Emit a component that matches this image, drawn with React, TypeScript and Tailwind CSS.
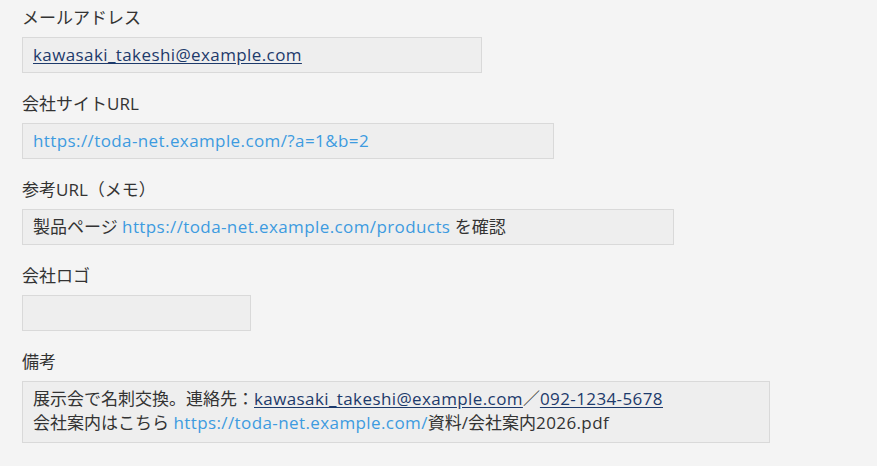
import React from "react";

const Field = ({ label, width, children }: { label: string; width: string; children?: React.ReactNode }) => {
    return (
        <div className="mb-[19px]">
            <div className="h-6 leading-6 text-[#333333]">{label}</div>
            <div className={`mt-[7px] min-h-9 border border-[#d9d9d9] bg-[#eeeeee] px-[10px] py-[5px] leading-6 text-[#333333] ${width}`}>
                {children}
            </div>
        </div>
    );
};

const Mail = ({ children }: { children: React.ReactNode }) => (
    <a href="#" className="tracking-[0.4px] text-[#1d3a6b] underline underline-offset-2">{children}</a>
);

const Url = ({ children }: { children: React.ReactNode }) => (
    <a href="#" className="tracking-[0.4px] text-[#3d9be0]">{children}</a>
);

export default function App() {
    return (
        <div
            className="min-h-[466px] bg-[#f4f4f4] px-[22px] pt-[6px] text-[17px]"
            style={{ fontFamily: '"Open Sans", "Noto Sans CJK JP", sans-serif' }}
        >
            <Field label="メールアドレス" width="w-[460px]">
                <Mail>kawasaki_takeshi@example.com</Mail>
            </Field>
            <Field label="会社サイトURL" width="w-[532px]">
                <Url>https://toda-net.example.com/?a=1&amp;b=2</Url>
            </Field>
            <Field label="参考URL（メモ）" width="w-[652px]">
                製品ページ <Url>https://toda-net.example.com/products</Url> を確認
            </Field>
            <Field label="会社ロゴ" width="w-[229px]" />
            <Field label="備考" width="w-[748px] pb-[7px]">
                展示会で名刺交換。連絡先：<Mail>kawasaki_takeshi@example.com</Mail>／<Mail>092-1234-5678</Mail>
                <br />
                会社案内はこちら <Url>https://toda-net.example.com/</Url>資料/会社案内<span className="tracking-[0.4px]">2026.pdf</span>
            </Field>
        </div>
    );
}
